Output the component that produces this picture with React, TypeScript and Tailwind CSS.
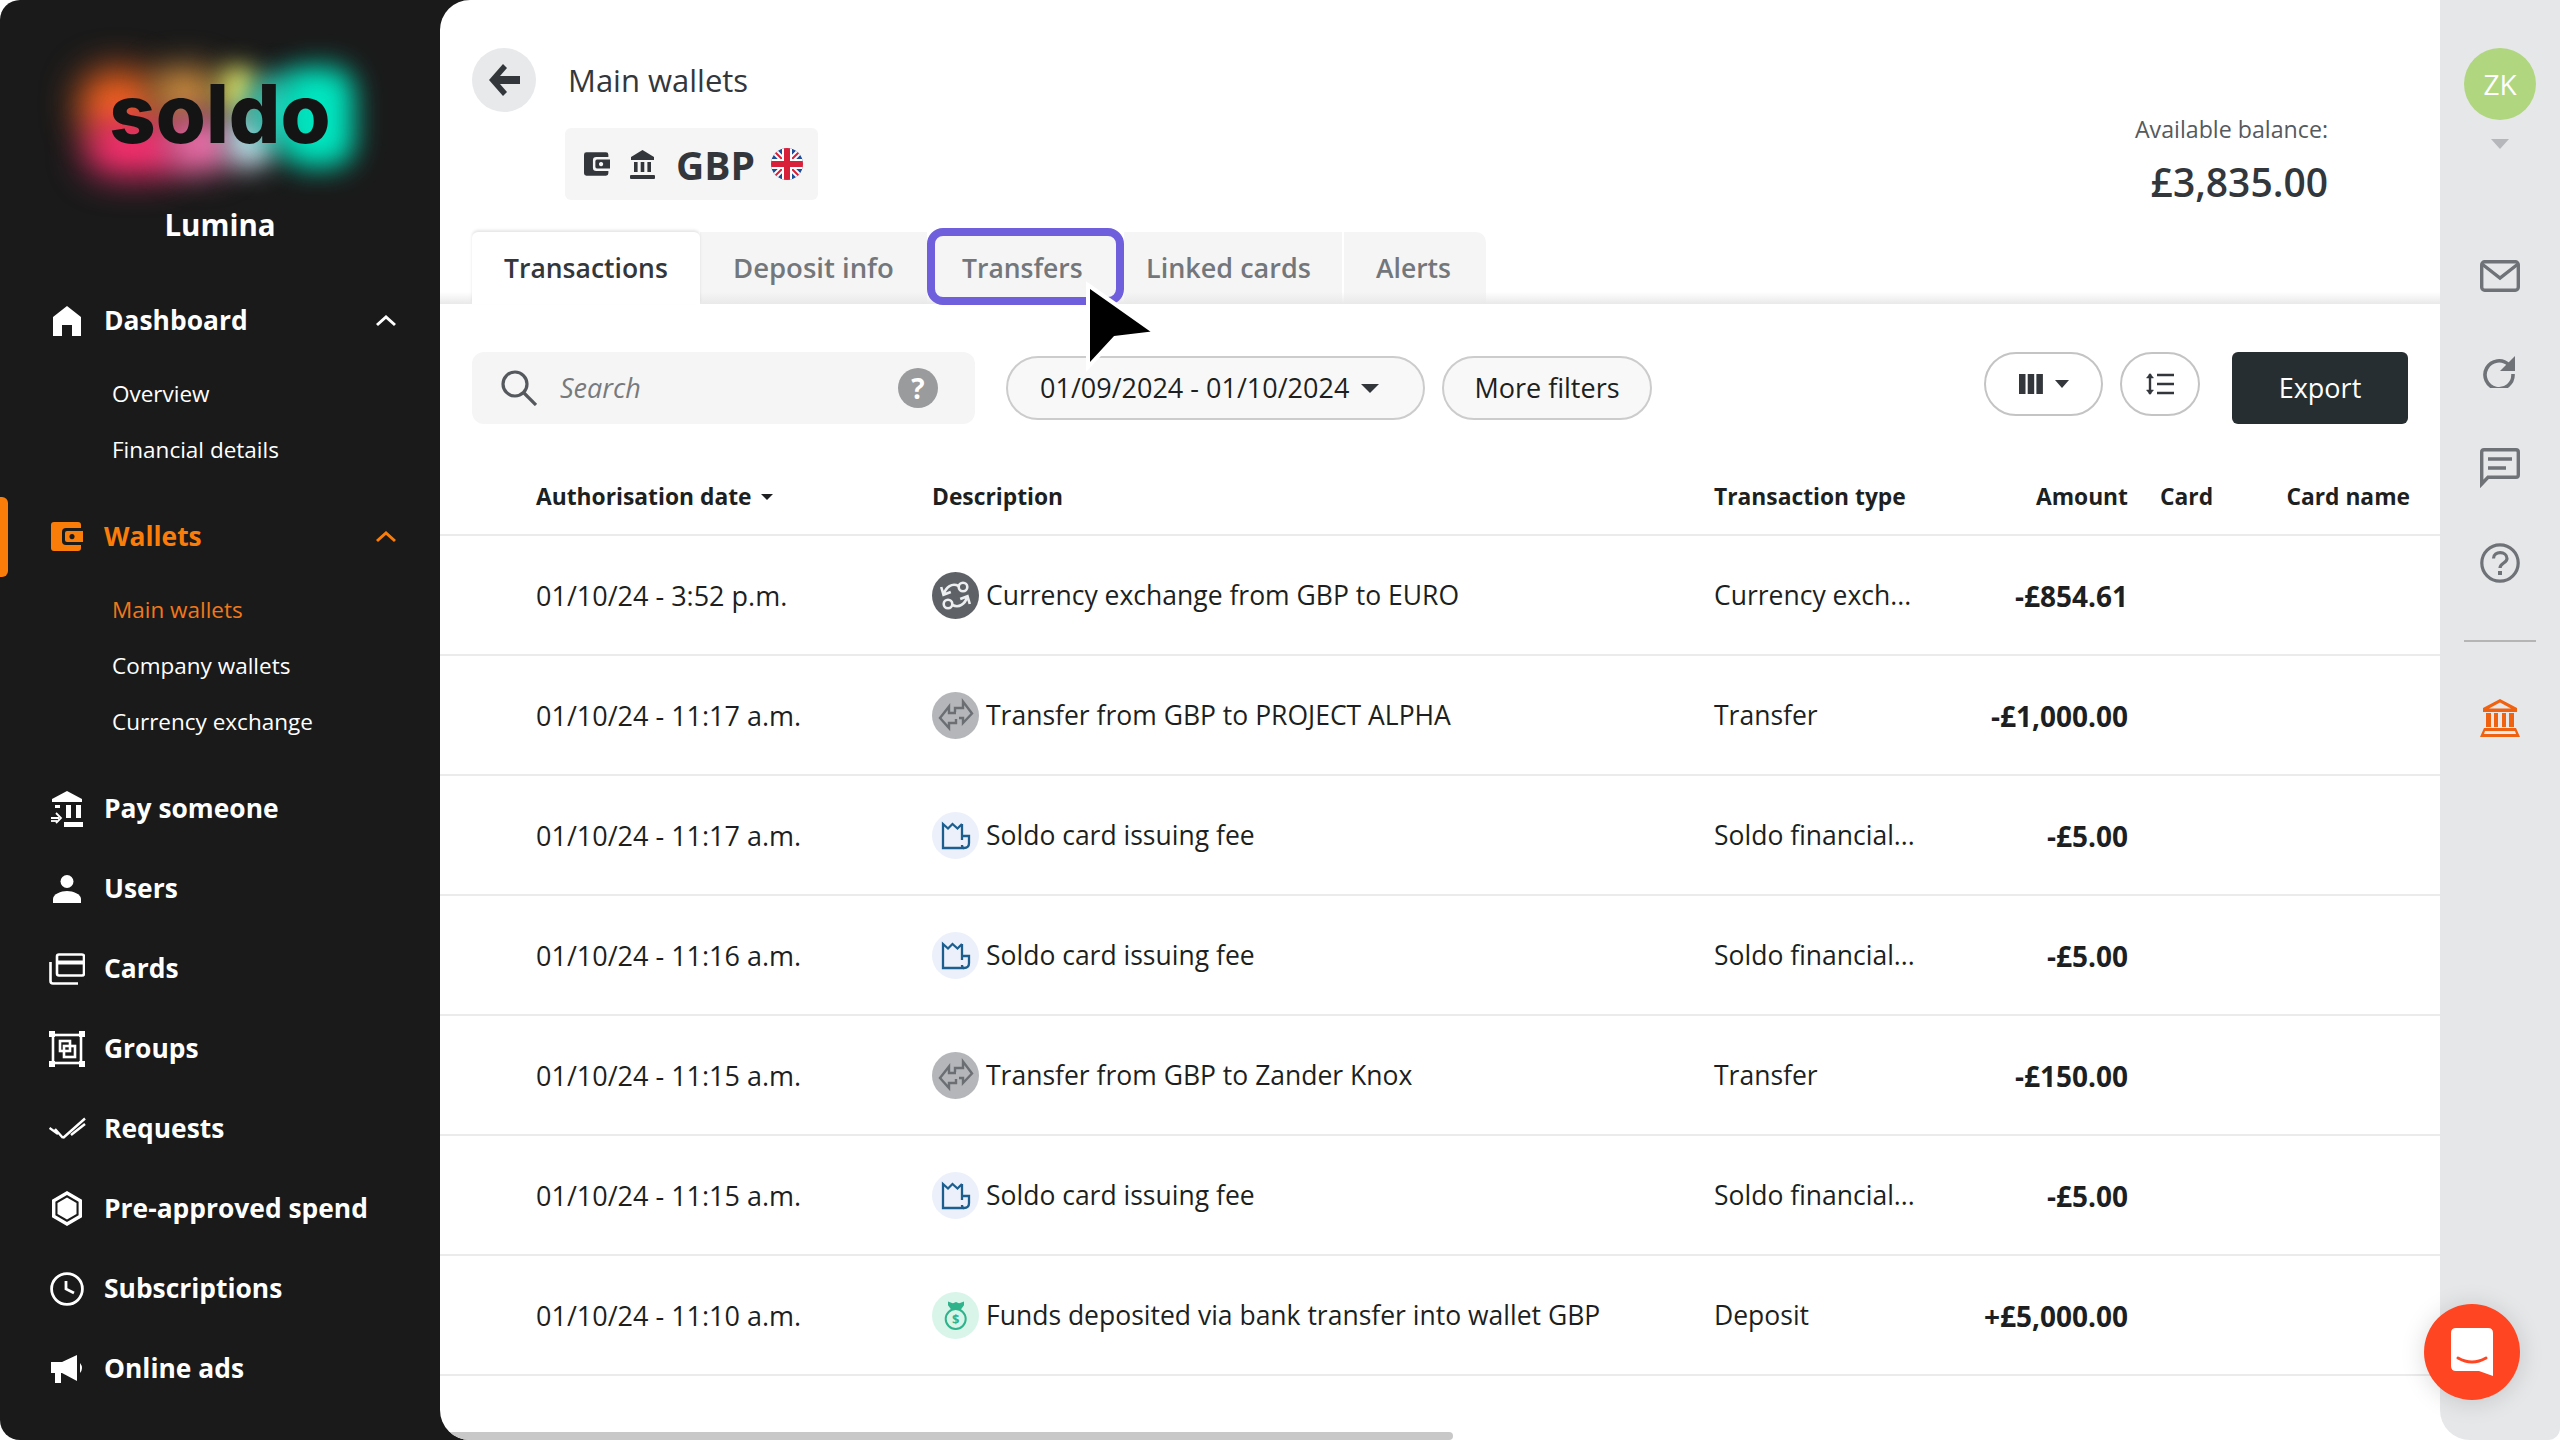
import { ReactNode } from 'react'

const font = "font-['Open_Sans',sans-serif]"

function HomeIcon() {
  return <svg width="28" height="30" viewBox="0 0 28 30" fill="currentColor"><path d="M14 0 L28 11 V30 H19 V19 H9 V30 H0 V11 Z" /></svg>
}
function WalletIcon({ w = 32, h = 29 }: { w?: number; h?: number }) {
  return (
    <svg width={w} height={h} viewBox="0 0 32 29" fill="currentColor">
      <path fillRule="evenodd" d="M3 0 H27 Q30 0 30 3 V6 H15 Q11 6 11 10 V19 Q11 23 15 23 H30 V26 Q30 29 27 29 H3 Q0 29 0 26 V3 Q0 0 3 0 Z M16 9 H32 V20 H16 Q14 20 14 18 V11 Q14 9 16 9 Z M21 12 a2.6 2.6 0 1 0 0.01 0 Z" />
    </svg>
  )
}
function PayIcon() {
  return (
    <svg width="34" height="36" viewBox="0 0 34 36" fill="currentColor">
      <path d="M17 0 L32 8 V11 H2 V8 Z" />
      <rect x="16" y="14" width="5" height="13" />
      <rect x="26" y="14" width="5" height="13" />
      <rect x="14" y="31" width="19" height="5" />
      <rect x="5" y="14" width="5" height="3" />
      <path d="M1 27 H9 M6 22 L11 27 L6 32 M1 24 V24" stroke="currentColor" strokeWidth="1.8" fill="none" />
      <path d="M1 30 H7" stroke="currentColor" strokeWidth="1.8" />
    </svg>
  )
}
function UserIcon() {
  return (
    <svg width="28" height="28" viewBox="0 0 28 28" fill="currentColor">
      <circle cx="14" cy="6.5" r="6.5" />
      <path d="M0 28 V24 C0 19 8 16 14 16 C20 16 28 19 28 24 V28 Z" />
    </svg>
  )
}
function CardsIcon() {
  return (
    <svg width="36" height="32" viewBox="0 0 36 32" fill="none" stroke="currentColor" strokeWidth="2.6">
      <rect x="8" y="1.5" width="27" height="21" rx="2" />
      <path d="M8 9.5 H35" strokeWidth="4" />
      <path d="M1.5 9 V28 Q1.5 30.5 4 30.5 H29" />
    </svg>
  )
}
function GroupsIcon() {
  return (
    <svg width="36" height="36" viewBox="0 0 36 36" fill="none" stroke="currentColor" strokeWidth="2.6">
      <rect x="4" y="4" width="28" height="28" />
      <rect x="11" y="10" width="10" height="10" />
      <rect x="15" y="15" width="11" height="11" />
      <g fill="currentColor" stroke="none">
        <rect x="0" y="0" width="6" height="6" /><rect x="30" y="0" width="6" height="6" />
        <rect x="0" y="30" width="6" height="6" /><rect x="30" y="30" width="6" height="6" />
      </g>
    </svg>
  )
}
function RequestsIcon() {
  return (
    <svg width="37" height="23" viewBox="0 0 37 23" fill="none" stroke="currentColor" strokeWidth="2.4">
      <path d="M0.5 11 L9 17 M14 21 L36 1.5 M14 21 L6 12" />
      <path d="M22 18 L36 7" />
    </svg>
  )
}
function HexIcon() {
  return (
    <svg width="30" height="35" viewBox="0 0 30 35" fill="currentColor">
      <path fillRule="evenodd" d="M15 0 L30 8.7 V26.3 L15 35 L0 26.3 V8.7 Z M15 4 L3.4 10.7 V24.3 L15 31 L26.6 24.3 V10.7 Z" />
      <path d="M15 6.5 L24.5 12 V23 L15 28.5 L5.5 23 V12 Z" />
    </svg>
  )
}
function ClockIcon() {
  return (
    <svg width="34" height="34" viewBox="0 0 34 34" fill="none" stroke="currentColor" strokeWidth="2.8">
      <circle cx="17" cy="17" r="15.4" />
      <path d="M16 9 V17 L24 21" />
    </svg>
  )
}
function AdsIcon() {
  return (
    <svg width="33" height="28" viewBox="0 0 33 28" fill="currentColor">
      <path d="M0 7 H11 L26 0 V26 L11 18 H10 V28 H4 V18 H0 Z" />
      <path d="M29 8 Q33 13 29 18 Z" />
    </svg>
  )
}
function Chevron() {
  return <svg width="20" height="12" viewBox="0 0 20 12" fill="none" stroke="currentColor" strokeWidth="3"><path d="M1 10 L10 2 L19 10" /></svg>
}

function SoldoLogo() {
  return (
    <div className="relative w-[440px] h-[170px] mt-[35px] flex items-center justify-center">
      <div className="absolute left-[78px] top-[34px] w-[80px] h-[70px] rounded-full bg-[#f2641e] blur-[18px]" />
      <div className="absolute left-[85px] top-[85px] w-[100px] h-[55px] rounded-full bg-[#ff2f74] blur-[18px]" />
      <div className="absolute left-[150px] top-[32px] w-[70px] h-[50px] rounded-full bg-[#c98a3e] blur-[16px]" />
      <div className="absolute left-[165px] top-[82px] w-[70px] h-[55px] rounded-full bg-[#f070ac] blur-[16px]" />
      <div className="absolute left-[218px] top-[30px] w-[40px] h-[50px] rounded-full bg-[#d9d860] blur-[12px]" />
      <div className="absolute left-[225px] top-[78px] w-[50px] h-[55px] rounded-full bg-[#c8e4f0] blur-[14px]" />
      <div className="absolute left-[245px] top-[40px] w-[60px] h-[70px] rounded-full bg-[#35c0b0] blur-[14px]" />
      <div className="absolute left-[282px] top-[32px] w-[72px] h-[100px] rounded-[24px] bg-[#00e6c0] blur-[14px]" />
      <span className="relative font-['Inter',sans-serif] font-extrabold text-[81px] leading-none text-[#141414] -mt-[12px]">soldo</span>
    </div>
  )
}

function MainNav({ icon, label, active, chevron }: { icon: ReactNode; label: string; active?: boolean; chevron?: boolean }) {
  return (
    <div className={`relative flex items-center h-[40px] ${active ? 'text-[#fa7d0a]' : 'text-white'}`}>
      {active && <div className="absolute left-0 top-[-20px] w-[8px] h-[80px] rounded-r-[6px] bg-[#fa7d0a]" />}
      <div className="w-[104px] pr-[3px] flex justify-center pl-[33px] shrink-0">{icon}</div>
      <span className="text-[26.4px] font-bold leading-none flex-1">{label}</span>
      {chevron && <div className="pr-[44px]"><Chevron /></div>}
    </div>
  )
}

function SubNav({ label, active }: { label: string; active?: boolean }) {
  return <div className={`h-[56px] flex items-center pl-[112px] text-[22.5px] ${active ? 'text-[#f0781a]' : 'text-white'}`}>{label}</div>
}

function Sidebar() {
  const rest: [ReactNode, string][] = [
    [<PayIcon />, 'Pay someone'],
    [<UserIcon />, 'Users'],
    [<CardsIcon />, 'Cards'],
    [<GroupsIcon />, 'Groups'],
    [<RequestsIcon />, 'Requests'],
    [<HexIcon />, 'Pre-approved spend'],
    [<ClockIcon />, 'Subscriptions'],
    [<AdsIcon />, 'Online ads'],
  ]
  return (
    <div className="w-[440px] shrink-0 flex flex-col">
      <SoldoLogo />
      <div className="text-center text-white text-[29.5px] font-bold leading-none mt-[5px]">Lumina</div>
      <div className="mt-[61px]">
        <MainNav icon={<HomeIcon />} label="Dashboard" chevron />
      </div>
      <div className="mt-[25px]">
        <SubNav label="Overview" />
        <SubNav label="Financial details" />
      </div>
      <div className="mt-[39px]">
        <MainNav icon={<WalletIcon />} label="Wallets" active chevron />
      </div>
      <div className="mt-[25px]">
        <SubNav label="Main wallets" active />
        <SubNav label="Company wallets" />
        <SubNav label="Currency exchange" />
      </div>
      <div className="mt-[39px] flex flex-col gap-[40px]">
        {rest.map(([icon, label]) => <MainNav key={label} icon={icon} label={label} />)}
      </div>
    </div>
  )
}

function UkFlag() {
  return (
    <svg width="32" height="32" viewBox="0 0 32 32" className="ml-[16px]">
      <defs><clipPath id="ukclip"><circle cx="16" cy="16" r="16" /></clipPath></defs>
      <g clipPath="url(#ukclip)">
        <rect width="32" height="32" fill="#1e4c96" />
        <path d="M0 0 L32 32 M32 0 L0 32" stroke="#fff" strokeWidth="6" />
        <path d="M0 0 L32 32 M32 0 L0 32" stroke="#d8203a" strokeWidth="2" />
        <path d="M16 0 V32 M0 16 H32" stroke="#fff" strokeWidth="10" />
        <path d="M16 0 V32 M0 16 H32" stroke="#d8203a" strokeWidth="6" />
      </g>
    </svg>
  )
}

function BankIcon({ size = 27 }: { size?: number }) {
  return (
    <svg width={size} height={size + 2} viewBox="0 0 27 29" fill="currentColor">
      <path d="M13.5 0 L25 7 V10 H2 V7 Z" />
      <rect x="5" y="12" width="3.6" height="10" />
      <rect x="11.7" y="12" width="3.6" height="10" />
      <rect x="18.4" y="12" width="3.6" height="10" />
      <rect x="1" y="25" width="25" height="4" rx="1" />
    </svg>
  )
}

function Header() {
  return (
    <div className="flex justify-between h-[200px]">
      <div className="pl-[32px] pt-[48px]">
        <div className="flex items-center">
          <div className="w-[64px] h-[64px] rounded-full bg-[#e8e9eb] flex items-center justify-center">
            <svg width="32" height="32" viewBox="0 0 32 32" fill="#33373c"><path d="M15 0 L1 16 L15 32 L19 28 L12 20 H32 V12 H12 L19 4 Z" /></svg>
          </div>
          <span className="ml-[32px] text-[31px] text-[#33373c]">Main wallets</span>
        </div>
        <div className="mt-[16px] ml-[93px] w-[253px] h-[72px] bg-[#f5f5f5] rounded-[6px] flex items-center pl-[19px] text-[#33373c]">
          <WalletIcon w={26} h={24} />
          <div className="ml-[19px]"><BankIcon /></div>
          <span className="ml-[20px] text-[39px] font-bold leading-none">GBP</span>
          <UkFlag />
        </div>
      </div>
      <div className="pr-[112px] pt-[112px] text-right">
        <div className="text-[23.2px] leading-[34px] text-[#555a5e]">Available balance:</div>
        <div className="mt-[16px] text-[39px] leading-[40px] font-semibold text-[#33373c]">£3,835.00</div>
      </div>
    </div>
  )
}

function Tabs() {
  return (
    <div className="relative mt-[32px] h-[72px] flex items-end pl-[32px] text-[26.5px] font-semibold">
      <div className="absolute inset-x-0 bottom-0 h-[12px] bg-linear-to-b from-transparent to-[#e9e9e9] z-10" />
      <div className="relative z-20 w-[228px] h-[72px] bg-white rounded-t-[6px] shadow-[0_-2px_3px_rgba(0,0,0,0.1)] pl-[32px] pt-[2px] flex items-center text-[#33373c]">Transactions</div>
      <div className="w-[227px] h-[72px] bg-[#f5f5f5] pl-[33px] flex items-center text-[27.5px] text-[#73777b]">Deposit info</div>
      <div className="relative z-20 w-[197px] h-[77px] -mb-[1px] bg-[#f5f5f5] border-[8px] border-[#6f5fdc] rounded-[16px] pl-[27px] pt-[4px] flex items-center text-[#73777b]">Transfers</div>
      <div className="w-[218px] h-[72px] bg-[#f5f5f5] pl-[22px] flex items-center text-[27px] text-[#73777b]">Linked cards</div>
      <div className="ml-[2px] w-[142px] h-[72px] bg-[#f5f5f5] rounded-tr-[10px] pl-[32px] pt-[2px] flex items-center text-[#73777b]">Alerts</div>
    </div>
  )
}

function Toolbar() {
  return (
    <div className="mt-[48px] flex pl-[32px] pr-[32px] h-[72px]">
      <div className="w-[503px] h-[72px] bg-[#f5f5f5] rounded-[12px] flex items-center pl-[29px] pr-[37px]">
        <svg width="36" height="36" viewBox="0 0 36 36" fill="none" stroke="#55595d" strokeWidth="3.2"><circle cx="14" cy="14" r="12" /><path d="M23 23 L35 35" /></svg>
        <span className="ml-[23px] flex-1 text-[27px] italic text-[#777a7d]">Search</span>
        <div className="w-[40px] h-[40px] rounded-full bg-[#9a9b9d] flex items-center justify-center text-white text-[28px] font-bold leading-none">?</div>
      </div>
      <div className="ml-[31px] mt-[4px] w-[419px] h-[64px] rounded-full border-2 border-[#cccccc] bg-[#f8f8f8] flex items-center pl-[32px] text-[27px] text-[#1d1f21]">
        01/09/2024 - 01/10/2024
        <span className="ml-[12px] w-0 h-0 border-x-[9px] border-x-transparent border-t-[9px] border-t-[#33373c]" />
      </div>
      <div className="ml-[17px] mt-[4px] w-[210px] h-[64px] rounded-full border-2 border-[#cccccc] bg-[#f8f8f8] flex items-center justify-center text-[27px] text-[#1d1f21]">More filters</div>
      <div className="ml-auto w-[119px] h-[64px] rounded-full border-2 border-[#c4c4c4] bg-white flex items-center justify-center">
        <svg width="24" height="20" viewBox="0 0 24 20" fill="#33373c"><rect width="6.5" height="20" /><rect x="8.7" width="6.5" height="20" /><rect x="17.4" width="6.5" height="20" /></svg>
        <span className="ml-[12px] w-0 h-0 border-x-[7px] border-x-transparent border-t-[8px] border-t-[#33373c]" />
      </div>
      <div className="ml-[17px] w-[80px] h-[64px] rounded-full border-2 border-[#c4c4c4] bg-white flex items-center justify-center">
        <svg width="28" height="24" viewBox="0 0 28 24" fill="none" stroke="#33373c" strokeWidth="2.4"><path d="M4 2 V22" /><path d="M0.5 6 L4 1.5 L7.5 6 Z M0.5 18 L4 22.5 L7.5 18 Z" fill="#33373c" strokeWidth="0.5" /><path d="M11 3 H28 M11 12 H28 M11 21 H28" /></svg>
      </div>
      <div className="ml-[32px] w-[176px] h-[72px] bg-[#272e31] rounded-[6px] flex items-center justify-center text-white text-[27px]">Export</div>
    </div>
  )
}

function CurrencyGlyph() {
  const half = (
    <>
      <circle cx="31" cy="15" r="4.3" />
      <path d="M26.6 14 C20 10.5 14 15 11.8 22 M9.2 15 L11.5 22.8 L18.8 20" />
    </>
  )
  return (
    <svg width="47" height="47" viewBox="0 0 47 47" fill="none" stroke="#eceef0" strokeWidth="2.6" className="shrink-0">
      <circle cx="23.5" cy="23.5" r="23.5" fill="#5e6166" stroke="none" />
      {half}
      <g transform="rotate(180 23.5 23.5)">{half}</g>
    </svg>
  )
}
function TransferGlyph() {
  return (
    <svg width="47" height="47" viewBox="0 0 47 47" fill="none" stroke="#6b6e73" strokeWidth="2.4" className="shrink-0">
      <circle cx="23.5" cy="23.5" r="23.5" fill="#b4b6b9" stroke="none" />
      <path d="M23 20 V16 H31 V9.5 L40 21.5 L31 31 V26 H27" />
      <path d="M24 21 H17 V14.5 L8 26 L17 36 V31 H24 V27" />
    </svg>
  )
}
function FeeGlyph() {
  return (
    <svg width="47" height="47" viewBox="0 0 47 47" fill="none" stroke="#1c5f8f" strokeWidth="2.3" className="shrink-0">
      <circle cx="23.5" cy="23.5" r="23.5" fill="#ebf0fa" stroke="none" />
      <path d="M30 12 L25.5 16.5 L20.5 12 L16 16.5 L11 12 V36 H32 M30 12 V28" />
      <path d="M30 24 H37 V31 Q37 36 32 36 Q30 36 30 33" />
    </svg>
  )
}
function DepositGlyph() {
  return (
    <svg width="47" height="47" viewBox="0 0 47 47" fill="none" stroke="#2fb38b" strokeWidth="2" className="shrink-0">
      <circle cx="23.5" cy="23.5" r="23.5" fill="#d9f5ea" stroke="none" />
      <circle cx="23.7" cy="27" r="10" />
      <path d="M17 11 L21 12.5 L24 11 L27 12.5 L31 11 V13 L28 17 H20 L17 13 Z" fill="#2fb38b" />
      <text x="23.7" y="32" textAnchor="middle" fontSize="13" fontWeight="700" fill="#2fb38b" stroke="none">$</text>
    </svg>
  )
}

const rows = [
  ['01/10/24 - 3:52 p.m.', <CurrencyGlyph />, 'Currency exchange from GBP to EURO', 'Currency exch...', '-£854.61'],
  ['01/10/24 - 11:17 a.m.', <TransferGlyph />, 'Transfer from GBP to PROJECT ALPHA', 'Transfer', '-£1,000.00'],
  ['01/10/24 - 11:17 a.m.', <FeeGlyph />, 'Soldo card issuing fee', 'Soldo financial...', '-£5.00'],
  ['01/10/24 - 11:16 a.m.', <FeeGlyph />, 'Soldo card issuing fee', 'Soldo financial...', '-£5.00'],
  ['01/10/24 - 11:15 a.m.', <TransferGlyph />, 'Transfer from GBP to Zander Knox', 'Transfer', '-£150.00'],
  ['01/10/24 - 11:15 a.m.', <FeeGlyph />, 'Soldo card issuing fee', 'Soldo financial...', '-£5.00'],
  ['01/10/24 - 11:10 a.m.', <DepositGlyph />, 'Funds deposited via bank transfer into wallet GBP', 'Deposit', '+£5,000.00'],
] as const

const cols = 'grid grid-cols-[396px_782px_214px_200px_130px_152px] pl-[96px]'

function Table() {
  return (
    <div>
      <div className={`${cols} h-[112px] items-end pb-[23px] border-b-2 border-[#ebebeb] text-[22.8px] font-bold leading-[28px] text-[#1d1f21]`}>
        <div className="flex items-center">
          Authorisation date
          <span className="ml-[9px] w-0 h-0 border-x-[6px] border-x-transparent border-t-[6px] border-t-[#1d1f21]" />
        </div>
        <div>Description</div>
        <div>Transaction type</div>
        <div className="text-right">Amount</div>
        <div className="pl-[32px]">Card</div>
        <div className="text-right">Card name</div>
      </div>
      {rows.map((r, i) => (
        <div key={i} className={`${cols} h-[120px] items-center border-b-2 border-[#ebebeb] text-[26.5px] text-[#1d1f21]`}>
          <div className="text-[27px] pt-[2px]">{r[0]}</div>
          <div className="flex items-center gap-[7px]">{r[1]}<span className="pt-[2px]">{r[2]}</span></div>
          <div className="pt-[2px]">{r[3]}</div>
          <div className="text-right font-bold text-[28px] pt-[2px]">{r[4]}</div>
          <div />
          <div />
        </div>
      ))}
    </div>
  )
}

function Rail() {
  return (
    <div className="w-[120px] shrink-0 bg-[#e6e7e9] rounded-bl-[30px] rounded-br-[12px] flex flex-col items-center text-[#6f7277]">
      <div className="mt-[48px] w-[72px] h-[72px] rounded-full bg-[#b0d67f] flex items-center justify-center text-white text-[28px]">ZK</div>
      <span className="mt-[19px] w-0 h-0 border-x-[9px] border-x-transparent border-t-[10px] border-t-[#b5b7ba]" />
      <svg className="mt-[111px]" width="40" height="32" viewBox="0 0 40 32" fill="none" stroke="currentColor" strokeWidth="3.4">
        <rect x="1.7" y="1.7" width="36.6" height="28.6" rx="3" /><path d="M2 4 L20 18 L38 4" />
      </svg>
      <svg className="mt-[64px]" width="34" height="32" viewBox="0 0 34 32" fill="none">
        <path d="M26 9 A14 14 0 1 0 30 18" stroke="currentColor" strokeWidth="3.6" />
        <path d="M32 0 V15 H17 Z" fill="currentColor" />
      </svg>
      <svg className="mt-[60px]" width="40" height="40" viewBox="0 0 40 40" fill="none" stroke="currentColor" strokeWidth="3.4">
        <path d="M1.7 36 V4 Q1.7 1.7 4 1.7 H36 Q38.3 1.7 38.3 4 V27 Q38.3 29.3 36 29.3 H8 Z" />
        <path d="M8 11 H32 M8 20 H26" />
      </svg>
      <svg className="mt-[55px]" width="40" height="40" viewBox="0 0 40 40" fill="none" stroke="currentColor" strokeWidth="3.2">
        <circle cx="20" cy="20" r="18.2" />
        <path d="M13.5 15.5 C13.5 7.5 27 8 27 15.5 C27 20 20 20 20 25" />
        <rect x="18" y="28" width="4" height="4" fill="currentColor" stroke="none" />
      </svg>
      <div className="mt-[57px] w-[72px] h-[2px] bg-[#b5b5b5]" />
      <div className="mt-[57px] text-[#f0620f]">
        <svg width="40" height="38" viewBox="0 0 40 38" fill="currentColor">
          <path d="M20 0 L37 9 V13 H3 V9 Z M20 3.5 L9 9.5 H31 Z" fillRule="evenodd" />
          <rect x="6" y="14" width="5" height="14" /><rect x="14" y="14" width="4" height="14" /><rect x="22" y="14" width="4" height="14" /><rect x="29" y="14" width="5" height="14" />
          <path d="M4 29 H36 L40 38 H0 Z M5 32 L4 35 H36 L35 32 Z" fillRule="evenodd" />
        </svg>
      </div>
    </div>
  )
}

export default function App() {
  return (
    <div className={`relative w-[2560px] h-[1440px] overflow-hidden flex rounded-l-[20px] bg-[#1a1a1a] ${font}`}>
      <Sidebar />
      <div className="flex-1 flex rounded-l-[30px] bg-white overflow-hidden">
        <div className="flex-1 flex flex-col">
          <Header />
          <Tabs />
          <Toolbar />
          <Table />
          <div className="mt-auto ml-[9px] w-[1004px] h-[8px] rounded-full bg-[#c8c8c8]" />
        </div>
        <Rail />
      </div>
      {/* cursor from the recording */}
      <svg className="absolute left-[1084px] top-[280px] z-30" width="78" height="92" viewBox="0 0 78 92">
        <path d="M4 5 L72 53 L31 58 L4 87 Z" fill="#000" stroke="#fff" strokeWidth="4" />
      </svg>
      {/* chat launcher */}
      <div className="absolute left-[2424px] top-[1304px] z-30 w-[96px] h-[96px] rounded-full bg-[#ff4521] shadow-[0_2px_24px_rgba(0,0,0,0.15)] flex items-center justify-center">
        <svg width="42" height="48" viewBox="0 0 42 48">
          <path d="M5 0 H37 Q42 0 42 5 V48 L28 43 H5 Q0 43 0 38 V5 Q0 0 5 0 Z" fill="#fff" />
          <path d="M7 30 Q21 38 35 30" stroke="#ff4521" strokeWidth="3" fill="none" strokeLinecap="round" />
        </svg>
      </div>
    </div>
  )
}
